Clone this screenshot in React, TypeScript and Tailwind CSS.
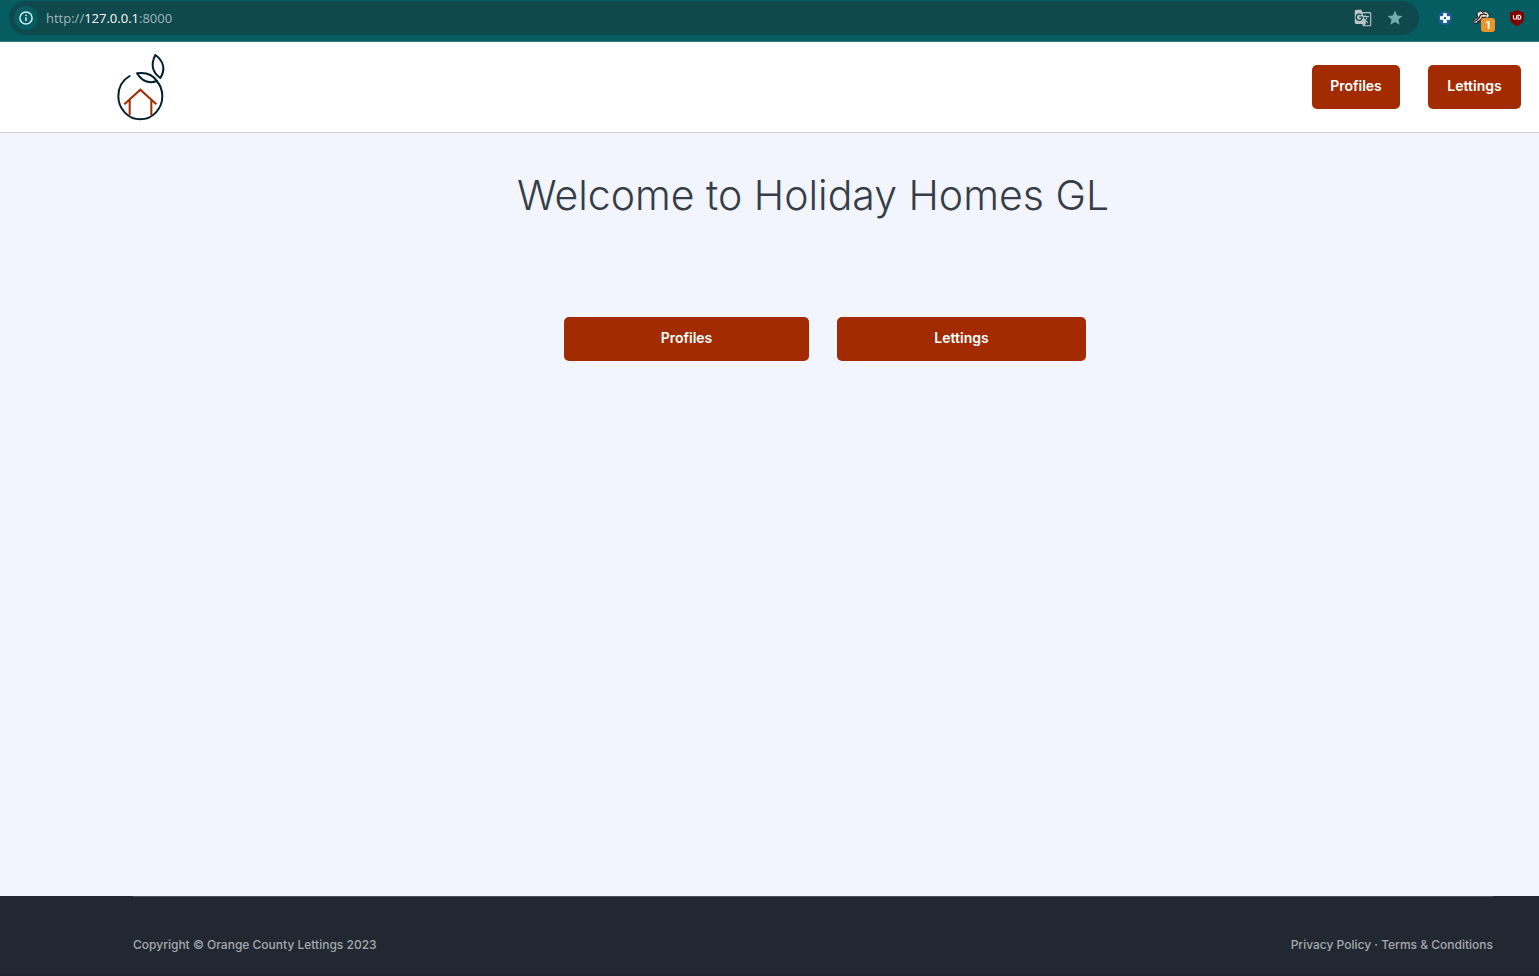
import { MdGTranslate, MdStar } from "react-icons/md";

function InfoIcon() {
  return (
    <svg viewBox="0 0 14 14" className="size-[14px]" fill="none" aria-hidden="true">
      <circle cx="7" cy="7" r="6.1" stroke="#d7eeee" strokeWidth="1.5" />
      <path d="M7 6.2v3.9" stroke="#d7eeee" strokeWidth="1.5" />
      <circle cx="7" cy="4.3" r="0.9" fill="#d7eeee" />
    </svg>
  );
}

function CrossBadgeIcon() {
  return (
    <svg viewBox="0 0 14 14" className="size-[14px]" aria-hidden="true">
      <circle cx="7" cy="7" r="7" fill="#1d5f99" />
      <path d="M5.2 2h3.6v3.2H12v3.6H8.8V12H5.2V8.8H2V5.2h3.2z" fill="#fff" />
      <rect x="6" y="6" width="2" height="2" fill="#1d5f99" />
    </svg>
  );
}

function BadgerIcon() {
  return (
    <svg viewBox="0 0 18 16" className="h-4 w-[18px]" aria-hidden="true">
      <path d="M1 11.500 3 9l3-1.500L5 4l1.500-2.500L9 1l1.500 1.500 3-1L16 3l1.500 3-2 2H12l-3 3-3.500 2H2z" fill="#f3e6de" stroke="#171313" strokeWidth="0.8" />
      <path d="M2 11.500 5 10l2-2 1.500-3L12 4l3 1M5 12.500 8.500 10l2-2.500 4-.5" fill="none" stroke="#171313" strokeWidth="1.2" />
      <path d="m7 3 1.500-.7M8.500 8 11 6" stroke="#d58c6c" strokeWidth="0.9" />
    </svg>
  );
}

function ShieldIcon() {
  return (
    <svg viewBox="0 0 14 16" className="h-4 w-[14px]" fill="none" aria-hidden="true">
      <path d="M7 0c2 1.400 4.500 2 7 2v6c0 4-3.500 6.500-7 8-3.500-1.500-7-4-7-8V2c2.500 0 5-.6 7-2z" fill="#800000" />
      <path d="M3.400 5.300v2.400a1.600 1.600 0 0 0 3.200 0V5.300" stroke="#fff" strokeWidth="1.100" />
      <path d="M8 5.300v3.900h.9a1.950 1.950 0 0 0 0-3.900z" stroke="#fff" strokeWidth="1.100" />
    </svg>
  );
}

function Logo() {
  return (
    <svg viewBox="0 0 192 234" className="h-[78px] w-16" fill="none" strokeWidth="6" aria-hidden="true">
      <path d="M59 84C38 96 25 119 25 145c0 38 30 69 66 69s66-31 66-69c0-18-6-34-17-46" stroke="#04202c" strokeLinecap="round" />
      <path d="M81 76c27-4 47 4 60 23-26 9-46 0-60-23z" stroke="#04202c" strokeLinejoin="round" />
      <path d="M136 21c24 17 32 43 15 69-24-17-29-41-15-69z" stroke="#04202c" strokeLinejoin="round" />
      <path d="m43 169 48-44 48 44M59 156v46M124 156v46" stroke="#a22b02" />
    </svg>
  );
}

const buttonBase =
  "flex h-11 items-center justify-center rounded-[5px] bg-[#a22b02] pb-0.5 text-sm font-semibold text-white";

export default function App() {
  return (
    <div className="flex min-h-screen flex-col bg-[#f2f5fd] font-['Inter',sans-serif]">
      <div className="flex h-[42px] items-start border-b border-[#328085] bg-[#055c61] pt-px pr-[15px] pl-[9px]">
        <div className="flex h-[34px] flex-1 items-center rounded-full bg-[#0f484d] pr-[15px] pl-[5px]">
          <button aria-label="Site information" className="flex size-6 items-center justify-center rounded-full bg-[#055c61]">
            <InfoIcon />
          </button>
          <span className="ml-2 flex-1 font-['Open_Sans',sans-serif] text-[13px] leading-5 text-[#9fb8ba]">
            http://<span className="text-white">127.0.0.1</span>:8000
          </span>
          <button aria-label="Translate this page" className="text-[#bcc5c6]">
            <MdGTranslate className="size-[18px]" />
          </button>
          <button aria-label="Bookmark this page" className="ml-[14px] text-[#72acae]">
            <MdStar className="size-[18px]" />
          </button>
        </div>
        <div className="ml-[19px] flex h-[34px] items-center">
          <button aria-label="Privacy extension">
            <CrossBadgeIcon />
          </button>
          <button aria-label="Badger extension" className="relative ml-5">
            <BadgerIcon />
            <span className="absolute top-2 left-[9px] flex h-[14px] w-[14px] items-center justify-center rounded-[3px] bg-[#ec9329] text-[10px] font-bold text-white">
              1
            </span>
          </button>
          <button aria-label="Content blocker" className="ml-5">
            <ShieldIcon />
          </button>
        </div>
      </div>

      <header className="flex h-[91px] items-center justify-between border-b border-[#ced1de] bg-white pr-[18px] pl-[110px]">
        <a href="#home" aria-label="Home">
          <Logo />
        </a>
        <nav className="flex gap-7">
          <a href="#profiles" className={`${buttonBase} w-[88px]`}>Profiles</a>
          <a href="#lettings" className={`${buttonBase} w-[93px]`}>Lettings</a>
        </nav>
      </header>

      <main className="flex flex-1 flex-col items-center pr-[46px] pl-[133px] pt-9">
        <h1 className="text-[41px] leading-[52px] font-light whitespace-nowrap text-[#363d47]">
          Welcome to Holiday Homes GL
        </h1>
        <div className="mt-24 flex gap-7 pl-6">
          <a href="#profiles" className={`${buttonBase} w-[245px]`}>Profiles</a>
          <a href="#lettings" className={`${buttonBase} w-[249px]`}>Lettings</a>
        </div>
      </main>

      <footer className="h-20 border-b border-[#1b2029] bg-[#212832] pr-[46px] pl-[133px]">
        <div className="flex items-center justify-between border-t border-[#4b515a] pt-[38px] text-xs leading-5 font-medium text-[#a6a9ad]">
          <span>Copyright © Orange County Lettings 2023</span>
          <span>
            <a href="#privacy">Privacy Policy</a> · <a href="#terms">Terms &amp; Conditions</a>
          </span>
        </div>
      </footer>
    </div>
  );
}
